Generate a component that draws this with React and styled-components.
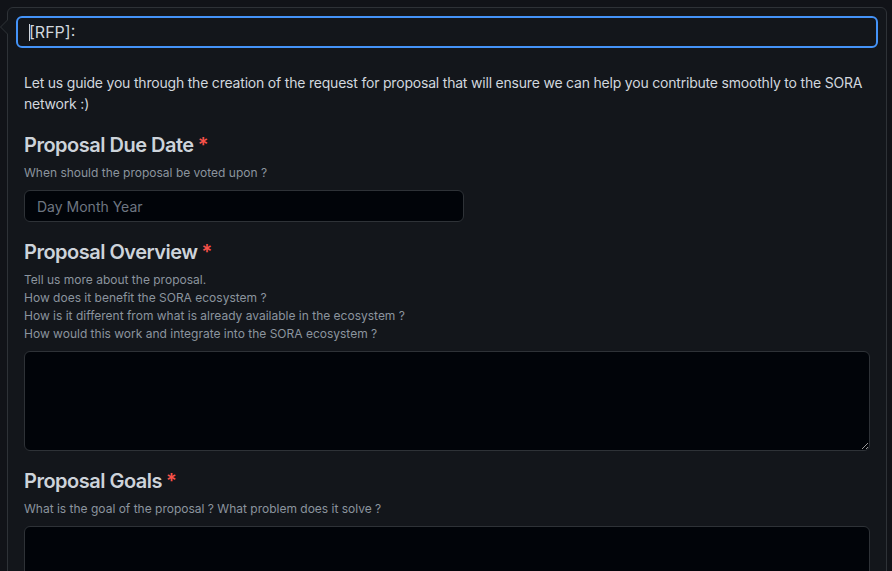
import * as React from "react";
import styled, { createGlobalStyle } from "styled-components";

const colors = {
  page: "#111318",
  box: "#13161b",
  border: "#2e3237",
  inset: "#010409",
  text: "#d1d7de",
  heading: "#cdd3da",
  muted: "#8b949e",
  placeholder: "#6e7681",
  accent: "#4493f8",
  danger: "#f85149",
};

const GlobalStyle = createGlobalStyle`
  html, body {
    margin: 0;
    background: ${colors.page};
    overflow: hidden;
  }
  body {
    font-family: Inter, "Noto Sans", sans-serif;
    -webkit-font-smoothing: antialiased;
  }
`;

const Page = styled.div`
  padding: 7px 5px 0 7px;
`;

const CommentBox = styled.div`
  position: relative;
  background: ${colors.box};
  border: 1px solid ${colors.border};
  border-radius: 6px;
  min-height: 600px;

  /* speech bubble caret */
  &::before,
  &::after {
    content: "";
    position: absolute;
    top: 11px;
    border-style: solid;
    border-color: transparent;
  }
  &::before {
    left: -8px;
    border-width: 8px 8px 8px 0;
    border-right-color: ${colors.border};
  }
  &::after {
    left: -7px;
    border-width: 8px 8px 8px 0;
    border-right-color: ${colors.box};
  }
`;

const Header = styled.div`
  padding: 8px 8px 8px;
`;

const TitleWrap = styled.div`
  position: relative;
`;

const TitleInput = styled.input`
  display: block;
  box-sizing: border-box;
  width: 100%;
  height: 32px;
  padding: 0 11px;
  font-family: inherit;
  font-size: 16px;
  color: ${colors.text};
  background: ${colors.box};
  border: 2px solid ${colors.accent};
  border-radius: 6px;
  outline: none;
`;

const Caret = styled.span`
  position: absolute;
  left: 13px;
  top: 8px;
  width: 1px;
  height: 17px;
  background: ${colors.text};
`;

const Body = styled.div`
  padding: 16px;
`;

const Intro = styled.p`
  margin: 0 0 16px;
  font-size: 14px;
  line-height: 21px;
  letter-spacing: -0.2px;
  color: ${colors.text};
`;

const Field = styled.div`
  margin-top: ${(p) => p.gap ?? 15}px;
`;

const Label = styled.h3`
  margin: 0;
  font-size: 20px;
  line-height: 30px;
  font-weight: 600;
  letter-spacing: -0.5px;
  color: ${colors.heading};
`;

const Required = styled.span`
  color: ${colors.danger};
  margin-left: 4px;
`;

const Description = styled.div`
  margin-top: 4px;
  font-size: 12px;
  line-height: 18px;
  color: ${colors.muted};
`;

const controlBase = `
  display: block;
  box-sizing: border-box;
  margin-top: 8px;
  font-family: inherit;
  font-size: 14px;
  color: ${colors.text};
  background: ${colors.inset};
  border: 1px solid ${colors.border};
  border-radius: 6px;
  outline: none;
  &::placeholder { color: ${colors.placeholder}; }
`;

const DateInput = styled.input`
  ${controlBase}
  width: 440px;
  height: 32px;
  padding: 0 12px;
`;

const TextArea = styled.textarea`
  ${controlBase}
  width: 100%;
  height: 100px;
  padding: 8px 12px;
  resize: vertical;
`;

const App = () => (
  <>
    <GlobalStyle />
    <Page>
      <CommentBox>
        <Header>
          <TitleWrap>
            <TitleInput defaultValue="[RFP]: " aria-label="Title" />
            <Caret />
          </TitleWrap>
        </Header>
        <Body>
          <Intro>
            Let us guide you through the creation of the request for proposal
            that will ensure we can help you contribute smoothly to the SORA
            network :)
          </Intro>

          <Field gap={16}>
            <Label>
              Proposal Due Date<Required>*</Required>
            </Label>
            <Description>When should the proposal be voted upon ?</Description>
            <DateInput placeholder="Day Month Year" />
          </Field>

          <Field>
            <Label>
              Proposal Overview<Required>*</Required>
            </Label>
            <Description>
              Tell us more about the proposal.
              <br />
              How does it benefit the SORA ecosystem ?
              <br />
              How is it different from what is already available in the
              ecosystem ?
              <br />
              How would this work and integrate into the SORA ecosystem ?
            </Description>
            <TextArea />
          </Field>

          <Field>
            <Label>
              Proposal Goals<Required>*</Required>
            </Label>
            <Description>
              What is the goal of the proposal ? What problem does it solve ?
            </Description>
            <TextArea />
          </Field>
        </Body>
      </CommentBox>
    </Page>
  </>
);

export default App;
